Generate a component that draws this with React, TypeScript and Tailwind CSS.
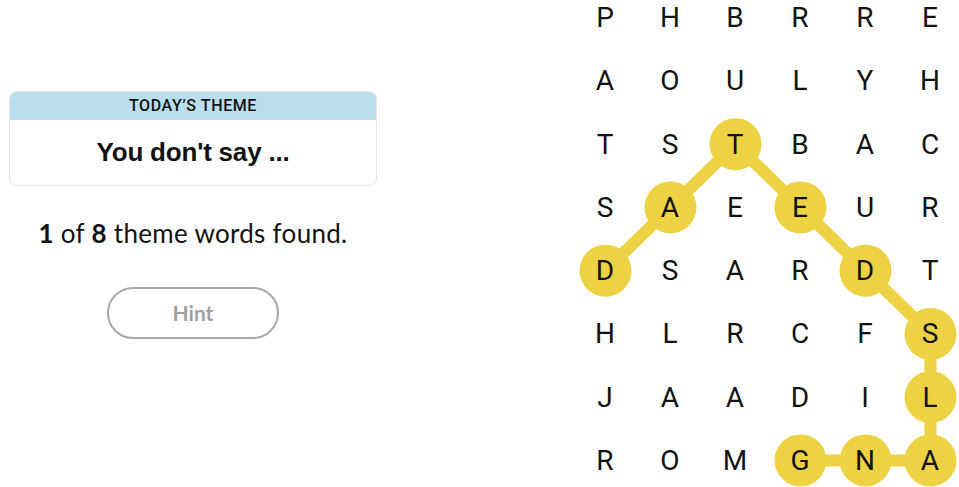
import React from "react";

const GRID = [
  "PHBRRE",
  "AOULYH",
  "TSTBAC",
  "SAEEUR",
  "DSARDT",
  "HLRCFS",
  "JAADIL",
  "ROMGNA",
];

const CW = 65;
const RH = 63.25;

const path: [number, number][] = [
  [4, 0],
  [3, 1],
  [2, 2],
  [3, 3],
  [4, 4],
  [5, 5],
  [6, 5],
  [7, 5],
  [7, 4],
  [7, 3],
];

export default function App() {
  const W = CW * 6;
  const H = RH * 8;
  const pts = path.map(([r, c]) => [c * CW + CW / 2, r * RH + RH / 2]);
  return (
    <div className="flex w-[959px] h-[487px] overflow-hidden bg-white font-['Liberation_Sans',Arial,sans-serif]">
      <div className="w-[386px] flex flex-col items-center shrink-0">
        <div className="mt-[91px] ml-[9px] self-start w-[368px] h-[95px] rounded-[8px] border border-[#e6e6e6] overflow-hidden flex flex-col">
          <div className="h-[28px] bg-[#bbdeec] flex items-center justify-center text-[16px] font-medium tracking-[0.6px] text-[#121212] font-['Roboto',sans-serif]">
            TODAY’S THEME
          </div>
          <div className="flex-1 flex items-center justify-center text-[26px] font-bold text-[#121212] tracking-[-0.2px]">
            You don't say ...
          </div>
        </div>
        <div className="mt-[31px] text-[26px] text-[#121212] leading-[32px] tracking-[0.3px] font-['Lato',sans-serif]">
          <span className="font-bold">1</span> of <span className="font-bold">8</span> theme words found.
        </div>
        <button className="mt-[38px] w-[172px] h-[52px] rounded-full border-2 border-[#a8a8a8] text-[#a0a0a0] text-[21px] font-bold flex items-center justify-center pb-[1px] font-['Lato',sans-serif]">
          Hint
        </button>
      </div>
      <div className="relative ml-[186.5px] mt-[-13.6px] shrink-0 w-[390px] h-[506px]">
        <svg className="absolute inset-0" width={W} height={H}>
          <polyline
            points={pts.map((p) => p.join(",")).join(" ")}
            fill="none"
            stroke="#edd244"
            strokeWidth={12}
            strokeLinejoin="round"
          />
          {pts.map(([x, y], i) => (
            <circle key={i} cx={x} cy={y} r={26} fill="#edd244" />
          ))}
        </svg>
        <div className="relative grid grid-cols-[repeat(6,65px)] grid-rows-[repeat(8,63.25px)] font-['Roboto',sans-serif]">
          {GRID.flatMap((row, r) =>
            row.split("").map((ch, c) => (
              <div
                key={`${r}-${c}`}
                className="flex items-center justify-center text-[28px] text-[#121212]"
              >
                {ch}
              </div>
            ))
          )}
        </div>
      </div>
    </div>
  );
}
